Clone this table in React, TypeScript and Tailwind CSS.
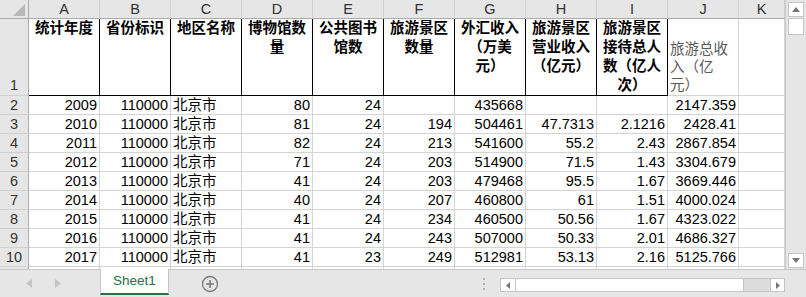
import React from "react";

const FONT = "font-['Liberation_Sans','Noto_Sans_CJK_SC',sans-serif]";

const letters = ["A", "B", "C", "D", "E", "F", "G", "H", "I", "J", "K"];

const headers = [
  "统计年度",
  "省份标识",
  "地区名称",
  "博物馆数量",
  "公共图书馆数",
  "旅游景区数量",
  "外汇收入（万美元）",
  "旅游景区营业收入（亿元）",
  "旅游景区接待总人数（亿人次）",
];

const rows = [
  ["2009", "110000", "北京市", "80", "24", "", "435668", "", "", "2147.359"],
  ["2010", "110000", "北京市", "81", "24", "194", "504461", "47.7313", "2.1216", "2428.41"],
  ["2011", "110000", "北京市", "82", "24", "213", "541600", "55.2", "2.43", "2867.854"],
  ["2012", "110000", "北京市", "71", "24", "203", "514900", "71.5", "1.43", "3304.679"],
  ["2013", "110000", "北京市", "41", "24", "203", "479468", "95.5", "1.67", "3669.446"],
  ["2014", "110000", "北京市", "40", "24", "207", "460800", "61", "1.51", "4000.024"],
  ["2015", "110000", "北京市", "41", "24", "234", "460500", "50.56", "1.67", "4323.022"],
  ["2016", "110000", "北京市", "41", "24", "243", "507000", "50.33", "2.01", "4686.327"],
  ["2017", "110000", "北京市", "41", "23", "249", "512981", "53.13", "2.16", "5125.766"],
];

function RowHead({ label, tall }: { label: string; tall?: boolean }) {
  return (
    <div
      className={`w-[29px] shrink-0 bg-[#e6e6e6] border-r border-b border-r-[#ababab] border-b-[#d0d0d0] flex justify-center text-[#333] leading-[18px] ${
        tall ? "h-[77px] items-end pb-[1px]" : "h-[19px] items-center"
      }`}
    >
      {label}
    </div>
  );
}

export default function App() {
  return (
    <div className={`w-[806px] h-[297px] bg-white overflow-hidden flex flex-col text-[14.5px] text-black ${FONT}`}>
      {/* sheet + vertical scrollbar */}
      <div className="flex h-[269px]">
        <div className="w-[785px] h-[269px] overflow-hidden">
          {/* column letters */}
          <div className="flex h-[19px]">
            <div className="w-[29px] h-[19px] bg-[#e6e6e6] border-r border-b border-[#ababab] relative">
              <svg width="12" height="12" className="absolute right-[3px] bottom-[2px]">
                <polygon points="12,0 12,12 0,12" fill="#b7b7b7" />
              </svg>
            </div>
            {letters.map((l, i) => (
              <div
                key={l}
                className={`${i === 10 ? "w-[46px]" : "w-[71px]"} h-[19px] bg-[#e6e6e6] border-r border-b border-r-[#d0d0d0] border-b-[#ababab] flex items-center justify-center text-[#333] leading-[18px]`}
              >
                {l}
              </div>
            ))}
          </div>

          {/* row 1 headers */}
          <div className="flex h-[77px]">
            <RowHead label="1" tall />
            {headers.map((h) => (
              <div
                key={h}
                className="w-[71px] h-[77px] border-r border-b border-black px-[3px] text-center font-bold leading-[19px] break-all"
              >
                {h}
              </div>
            ))}
            <div className="w-[71px] h-[77px] border-r border-b border-r-[#d4d4d4] border-b-[#d4d4d4] flex items-end pl-[2px] pr-[10px] pb-[1px] text-[#595959] leading-[18px]">
              旅游总收入（亿元）
            </div>
            <div className="w-[46px] h-[77px] border-r border-b border-[#d4d4d4]" />
          </div>

          {/* data rows */}
          {rows.map((r, ri) => (
            <div key={ri} className="flex h-[19px]">
              <RowHead label={String(ri + 2)} />
              {r.map((v, ci) => (
                <div
                  key={ci}
                  className={`w-[71px] h-[19px] border-r border-b border-[#d4d4d4] leading-[18px] whitespace-nowrap overflow-hidden ${
                    ci === 2 ? "text-left pl-[2px]" : "text-right pr-[2px]"
                  }`}
                >
                  {v}
                </div>
              ))}
              <div className="w-[46px] h-[19px] border-r border-b border-[#d4d4d4]" />
            </div>
          ))}

          {/* sliver of row 11 */}
          <div className="flex h-[19px]">
            <div className="w-[29px] h-[19px] bg-[#e6e6e6] border-r border-[#ababab]" />
            {letters.map((l, i) => (
              <div key={l} className={`${i === 10 ? "w-[46px]" : "w-[71px]"} h-[19px] border-r border-[#d4d4d4]`} />
            ))}
          </div>
        </div>

        {/* vertical scrollbar */}
        <div className="w-[21px] h-[269px] bg-[#e6e6e6] border-l border-[#c6c6c6] flex flex-col items-center pt-[2px] pb-[1px]">
          <div className="w-[16px] h-[15px] bg-white border border-[#c6c6c6] flex items-center justify-center">
            <svg width="8" height="5">
              <polygon points="0,5 8,5 4,0" fill="#777" />
            </svg>
          </div>
          <div className="w-[16px] h-[17px] bg-white border border-[#c6c6c6] mt-[1px]" />
          <div className="flex-1" />
          <div className="w-[16px] h-[15px] bg-white border border-[#c6c6c6] flex items-center justify-center">
            <svg width="8" height="5">
              <polygon points="0,0 8,0 4,5" fill="#777" />
            </svg>
          </div>
        </div>
      </div>

      {/* bottom tab bar */}
      <div className="flex-1 bg-[#e6e6e6] border-t border-[#c6c6c6] flex items-start">
        <div className="w-[100px] h-full flex items-center">
          <svg width="6" height="9" className="ml-[26px]">
            <polygon points="6,0 6,9 0,4.5" fill="#c4c4c4" />
          </svg>
          <svg width="6" height="9" className="ml-[23px]">
            <polygon points="0,0 0,9 6,4.5" fill="#c4c4c4" />
          </svg>
        </div>
        <div className="w-[69px] h-[26px] -mt-px bg-white border-l border-r border-[#c6c6c6] border-b-2 border-b-[#217346] flex items-center justify-center text-[13.5px] text-[#217346] font-['Liberation_Sans',sans-serif]">
          Sheet1
        </div>
        <div className="h-full flex items-center ml-[32px]">
          <svg width="18" height="18" viewBox="0 0 18 18">
            <circle cx="9" cy="9" r="7.5" fill="none" stroke="#7a7a7a" strokeWidth="1.3" />
            <line x1="9" y1="5" x2="9" y2="13" stroke="#7a7a7a" strokeWidth="1.6" />
            <line x1="5" y1="9" x2="13" y2="9" stroke="#7a7a7a" strokeWidth="1.6" />
          </svg>
        </div>
        <div className="h-full flex flex-col justify-center gap-[3px] ml-[264px]">
          <div className="w-[2px] h-[2px] bg-[#b0b0b0]" />
          <div className="w-[2px] h-[2px] bg-[#b0b0b0]" />
          <div className="w-[2px] h-[2px] bg-[#b0b0b0]" />
        </div>
        <div className="ml-[15px] mt-[8px] w-[285px] h-[14px] flex border border-[#c6c6c6] bg-[#dcdcdc]">
          <div className="w-[15px] h-full bg-white border-r border-[#c6c6c6] flex items-center justify-center">
            <svg width="4" height="7">
              <polygon points="4,0 4,7 0,3.5" fill="#777" />
            </svg>
          </div>
          <div className="w-[228px] h-full bg-white border-r border-[#c6c6c6]" />
          <div className="flex-1" />
          <div className="w-[14px] h-full bg-white border-l border-[#c6c6c6] flex items-center justify-center">
            <svg width="4" height="7">
              <polygon points="0,0 0,7 4,3.5" fill="#777" />
            </svg>
          </div>
        </div>
      </div>
    </div>
  );
}
